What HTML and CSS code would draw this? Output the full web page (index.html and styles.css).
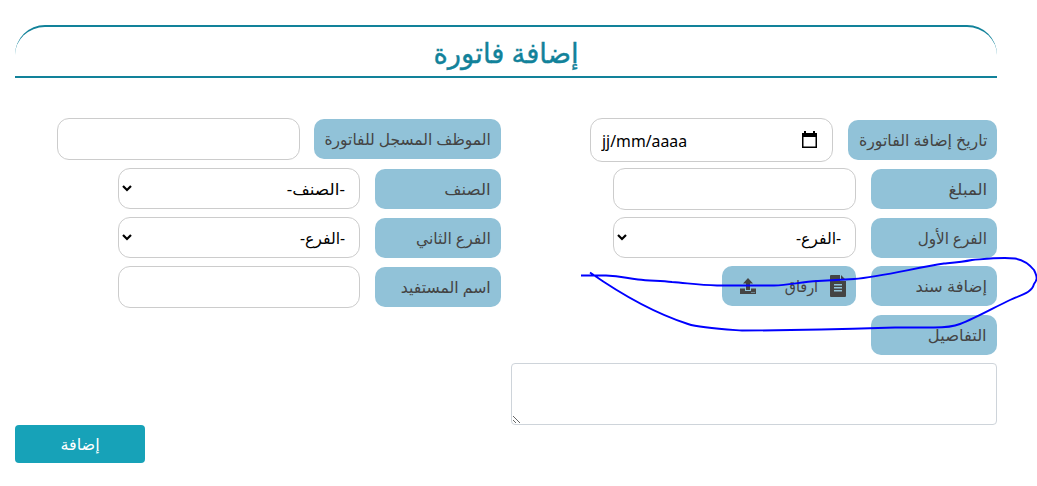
FILE: index.html
```html
<!DOCTYPE html>
<html lang="ar" dir="rtl">
<head>
<meta charset="utf-8">
<title>إضافة فاتورة</title>
<link rel="stylesheet" href="styles.css">
</head>
<body>
<main class="page">
  <h1 class="title"><span class="title-text">إضافة فاتورة</span></h1>
  <form class="form">
    <div class="columns">
      <section class="column">
        <div class="row first">
          <label class="label low w149"><span class="t t-date">تاريخ إضافة الفاتورة</span></label>
          <div class="field date" dir="ltr">
            <span class="date-text">jj/mm/aaaa</span>
            <svg class="calendar" width="15" height="17" viewBox="0 0 15 17"><path d="M0 2h2V0h2v2h7V0h2v2h2v15H0zM1.500 6v9.500h12V6z" fill="#000" fill-rule="evenodd"/></svg>
          </div>
        </div>
        <div class="row">
          <label class="label"><span class="t t-amount">المبلغ</span></label>
          <input class="field" type="text">
        </div>
        <div class="row">
          <label class="label"><span class="t t-branch1">الفرع الأول</span></label>
          <div class="field select"><span class="t t-opt">-الفرع-</span><svg class="chevron" width="10" height="7" viewBox="0 0 10 7"><path d="M1 1l4 4 4-4" fill="none" stroke="#000" stroke-width="2.200"/></svg></div>
        </div>
        <div class="row">
          <label class="label top"><span class="t t-doc">إضافة سند</span></label>
          <div class="attach">
            <svg class="file" width="16" height="22" viewBox="0 0 16 22"><path d="M1 0h9v6h6v15q0 1-1 1H1q-1 0-1-1V1q0-1 1-1zM11 0l5 5h-5zM4 9v1.500h8V9zM4 12v1.500h8V12zM4 15v1.500h8V15z" fill="#444" fill-rule="evenodd"/></svg>
            <span class="t t-attach">ارفاق</span>
            <svg class="upload" width="16" height="16" viewBox="0 0 16 16"><path d="M8 0l5 5.500h-3V12H6V5.500H3zM0 10.500h5V13h6v-2.500h5V16H0zM11.500 14v1h1v-1zM13.500 14v1h1v-1z" fill="#444" fill-rule="evenodd"/></svg>
          </div>
        </div>
        <div class="row">
          <label class="label top"><span class="t t-details">التفاصيل</span></label>
        </div>
      </section>
      <section class="column">
        <div class="row first">
          <label class="label w187"><span class="t t-emp">الموظف المسجل للفاتورة</span></label>
          <input class="field near" type="text">
        </div>
        <div class="row">
          <label class="label"><span class="t t-cat">الصنف</span></label>
          <div class="field select narrow"><span class="t t-optcat">-الصنف-</span><svg class="chevron" width="10" height="7" viewBox="0 0 10 7"><path d="M1 1l4 4 4-4" fill="none" stroke="#000" stroke-width="2.200"/></svg></div>
        </div>
        <div class="row">
          <label class="label"><span class="t t-branch2">الفرع الثاني</span></label>
          <div class="field select narrow"><span class="t t-opt">-الفرع-</span><svg class="chevron" width="10" height="7" viewBox="0 0 10 7"><path d="M1 1l4 4 4-4" fill="none" stroke="#000" stroke-width="2.200"/></svg></div>
        </div>
        <div class="row">
          <label class="label"><span class="t t-name">اسم المستفيد</span></label>
          <input class="field narrow" type="text">
        </div>
      </section>
    </div>
    <textarea class="details"></textarea>
    <button class="submit" type="button"><span class="t t-submit">إضافة</span></button>
  </form>
</main>
<svg class="ink" width="1037" height="486" viewBox="0 0 1037 486"><path d="M581 275.500H606C622 276 625 278 638 279.500C650 281 660 280.500 672 282C690 283.500 700 285 717 285.500H774C790 285 800 282 818 281L854 279C880 277 915 268 944 263.500C955 262.500 962 262 972 260C990 258.500 1002 257 1015 258.500C1024 260 1030 265 1034 270C1038 278 1037 280 1034 284C1032 292 1024 294 1010 300C995 307 976 318 960 324C950 328 940 327.500 930 327.500H895C850 329 810 330.500 742 330.500C720 329 700 328 688 324C660 315 625 297 590 272.500" fill="none" stroke="#0000ff" stroke-width="1.900" stroke-linejoin="round"/></svg>
</body>
</html>
```
FILE: styles.css
```css
* { box-sizing: border-box; }
body { margin: 0; background: #fff; font-family: "Noto Sans", "DejaVu Sans", sans-serif; color: #444; overflow: hidden; }
.page { width: 1037px; height: 486px; padding: 25px 40px 0 15px; }
.title { display: flex; justify-content: center; align-items: center; height: 53px; margin: 0; padding-bottom: 2px; border-top: 2px solid #12829a; border-radius: 30px 30px 0 0; background: linear-gradient(#12829a, #12829a) bottom / 100% 2px no-repeat; color: #12829a; font-size: 28px; font-weight: 400; line-height: 1; }
.title-text, .t { display: block; flex: none; white-space: nowrap; }
.title-text { transform: scaleX(.98); -webkit-text-stroke: .4px #12829a; }
.t { transform-origin: right center; }
.t-date { transform: scaleX(.985); }
.t-emp { transform: scaleX(.968); }
.t-amount { transform: scaleX(1.04); }
.t-branch1 { transform: scaleX(.95); }
.t-branch2 { transform: scaleX(.975); }
.t-cat { transform: scaleX(1.04); }
.t-optcat { transform: scaleX(1.06); }
.t-opt { transform: scaleX(.98); }
.t-doc { transform: scaleX(1.02); }
.t-details { transform: scaleX(1.02); }
.t-name { transform: scaleX(.98); }
.form { display: flex; flex-direction: column; }
.columns { display: grid; grid-template-columns: 486px 486px; column-gap: 10px; padding-top: 40px; height: 285px; }
.row { display: flex; align-items: flex-start; gap: 15px; height: 49px; }
.row.first { height: 50px; }
.label { display: flex; align-items: center; flex: none; width: 126px; height: 40px; margin-top: 1px; padding-right: 10px; border-radius: 10px; background: #91c2d8; font-size: 16px; line-height: 1; }
.low { margin-top: 2px; }
.top { margin-top: 0; }
.w149 { width: 149px; }
.w187 { width: 187px; }
.field { flex: none; width: 243px; height: 42px; margin: 0; border: 1px solid #ccc; border-radius: 12px; background: #fff; color: #000; font-size: 16px; }
.narrow { width: 242px; }
.near { margin-right: -1px; }
.date { display: flex; align-items: center; justify-content: space-between; height: 44px; padding: 0 15px 0 11px; }
.date-text { padding-top: 1px; font-size: 16px; transform: scaleX(.99); transform-origin: left center; }
.calendar { margin-bottom: 1px; }
.select { display: flex; align-items: center; justify-content: space-between; height: 41px; padding: 0 14px 0 3px; line-height: 1; }
.chevron { margin-bottom: 1px; }
.attach { display: flex; align-items: center; width: 134px; height: 40px; padding: 0 10px 0 18px; border-radius: 10px; background: #91c2d8; font-size: 16px; line-height: 1; }
.t-attach { margin-right: 12px; transform: scaleX(.9); }
.upload { margin-right: auto; }
.details { width: 486px; height: 62px; margin: 0; border: 1px solid #ced4da; border-radius: 4px; resize: vertical; }
.submit { display: flex; align-items: center; justify-content: center; align-self: flex-end; width: 130px; height: 38px; padding: 0; border: 0; border-radius: 4px; background: #17a2b8; color: #fff; font: 16px/1 "Noto Sans", "DejaVu Sans", sans-serif; }
.ink { position: absolute; left: 0; top: 0; pointer-events: none; }
```
